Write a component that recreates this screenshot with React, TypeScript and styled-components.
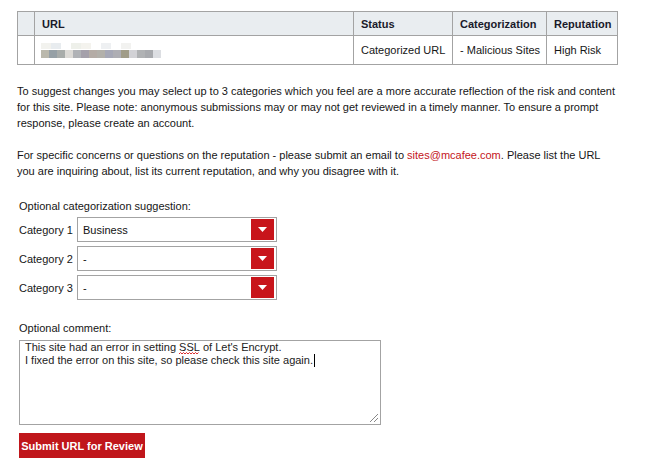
import React from 'react'
import styled, { createGlobalStyle } from 'styled-components'

const GlobalStyle = createGlobalStyle`
  html, body {
    margin: 0;
    padding: 0;
    background: #fff;
  }
  body {
    font-family: "Liberation Sans", Arial, sans-serif;
    font-size: 11px;
    color: #161616;
  }
`

const Page = styled.div`
  padding: 11px 0 0 17px;
  width: 620px;
`

const Table = styled.table`
  border-collapse: collapse;
  table-layout: fixed;
  width: 600px;
  font-size: 11px;
`

const Th = styled.th`
  background: #e9edf0;
  border: 1px solid #a3a3a3;
  text-align: left;
  font-weight: bold;
  height: 23px;
  padding: 0 7px;
  color: #1a1a2a;
  white-space: nowrap;
`

const Td = styled.td`
  border: 1px solid #a3a3a3;
  height: 28px;
  padding: 0 7px;
  white-space: nowrap;
`

const Blur = styled.svg`
  display: block;
  margin-top: 1px;
  margin-left: -1px;
`

const Text = styled.p<{ $first?: boolean }>`
  margin: ${p => (p.$first ? '18px' : '0')} 0 16px;
  line-height: 16px;
  width: 600px;
`

const Red = styled.span`
  color: #c4151c;
`

const Form = styled.div`
  padding-left: 2px;
  margin-top: 19px;
`

const Caption = styled.div`
  line-height: 16px;
  margin-bottom: 3px;
`

const Rows = styled.div`
  display: flex;
  flex-direction: column;
  gap: 4px;
`

const Row = styled.div`
  display: flex;
  align-items: center;
`

const Label = styled.span`
  width: 58px;
  white-space: nowrap;
`

const Select = styled.div`
  width: 200px;
  height: 25px;
  box-sizing: border-box;
  border: 1px solid #a3a3a3;
  display: flex;
  align-items: center;
  justify-content: space-between;
  padding: 0 2px 0 5px;
  color: #111;
`

const Arrow = styled.div`
  width: 23px;
  height: 21px;
  background: #c8151b;
  display: flex;
  align-items: center;
  justify-content: center;
`

const Comment = styled.div`
  margin-top: 20px;
  line-height: 16px;
  margin-bottom: 4px;
`

const Area = styled.div`
  position: relative;
  width: 362px;
  height: 85px;
  box-sizing: border-box;
  border: 1px solid #a3a3a3;
  padding: 0 5px;
  line-height: 13px;
  color: #222;
`

const Wavy = styled.span`
  position: relative;
  display: inline-block;
`

const Squiggle = styled.svg`
  position: absolute;
  left: 0;
  bottom: -1px;
`

const Caret = styled.span`
  display: inline-block;
  width: 1px;
  height: 13px;
  background: #000;
  vertical-align: -3px;
  margin-left: 1px;
`

const Grip = styled.svg`
  position: absolute;
  right: 1px;
  bottom: 1px;
`

const Button = styled.button`
  display: block;
  margin-top: 8px;
  height: 25px;
  width: 126px;
  padding: 0;
  border: none;
  background: #c0161b;
  color: #fff;
  font-family: "Liberation Sans", Arial, sans-serif;
  font-size: 11px;
  font-weight: bold;
  text-align: center;
  white-space: nowrap;
`

const Rule = styled.hr`
  margin: 9px 0 0 1px;
  width: 605px;
  border: none;
  border-top: 2px solid #d0d0d0;
`

const blurTop = ['#f2f2ee', '#e8ecef', '#fff', '#eef0ea', '#f4f3ee', '#fff', '#eef0f2', '#fff', '#f2f2f0']
const blurBottom = ['#bab8ac', '#96a0a6', '#a8acaa', '#dcdad6', '#b0b2b6', '#a4a0aa', '#b4aca6', '#b2b0aa', '#a6a8b6', '#aeaeb4', '#a09c88', '#d2d2d6', '#b0b2b4', '#a8aaae', '#dcdee2']

export default function App() {
  return (
    <>
      <GlobalStyle />
      <Page>
        <Table>
          <colgroup>
            <col style={{ width: 17 }} />
            <col style={{ width: 319 }} />
            <col style={{ width: 99 }} />
            <col style={{ width: 94 }} />
            <col style={{ width: 71 }} />
          </colgroup>
          <thead>
            <tr>
              <Th />
              <Th>URL</Th>
              <Th>Status</Th>
              <Th>Categorization</Th>
              <Th>Reputation</Th>
            </tr>
          </thead>
          <tbody>
            <tr>
              <Td />
              <Td>
                <Blur width="120" height="16">
                  {blurTop.map((c, i) => (
                    <rect key={i} x={i * 10} y={0} width={10} height={6} fill={c} />
                  ))}
                  {blurBottom.map((c, i) => (
                    <rect key={i} x={i * 8} y={7} width={8} height={8} fill={c} />
                  ))}
                </Blur>
              </Td>
              <Td>Categorized URL</Td>
              <Td>- Malicious Sites</Td>
              <Td>High Risk</Td>
            </tr>
          </tbody>
        </Table>

        <Text $first>
          To suggest changes you may select up to 3 categories which you feel are a more accurate reflection of the risk and content for this site. Please note: anonymous submissions may or may not get reviewed in a timely manner. To ensure a prompt response, please create an account.
        </Text>
        <Text>
          For specific concerns or questions on the reputation - please submit an email to <Red>sites@mcafee.com</Red>. Please list the URL you are inquiring about, list its current reputation, and why you disagree with it.
        </Text>

        <Form>
          <Caption>Optional categorization suggestion:</Caption>
          <Rows>
            {['Business', '-', '-'].map((v, i) => (
              <Row key={i}>
                <Label>Category {i + 1}</Label>
                <Select>
                  <span>{v}</span>
                  <Arrow>
                    <svg width="9" height="5" viewBox="0 0 9 5">
                      <path d="M0 0 H9 L4.5 5 Z" fill="#fff" />
                    </svg>
                  </Arrow>
                </Select>
              </Row>
            ))}
          </Rows>

          <Comment>Optional comment:</Comment>
          <Area>
            This site had an error in setting{' '}
            <Wavy>
              SSL
              <Squiggle width="20" height="3" viewBox="0 0 20 3">
                <path d="M0 2 L1.5 0.5 L3 2 L4.5 0.5 L6 2 L7.5 0.5 L9 2 L10.5 0.5 L12 2 L13.5 0.5 L15 2 L16.5 0.5 L18 2 L19.5 0.5" stroke="#d81818" strokeWidth="0.9" fill="none" />
              </Squiggle>
            </Wavy>{' '}
            of Let's Encrypt.
            <br />
            I fixed the error on this site, so please check this site again.<Caret />
            <Grip width="11" height="11" viewBox="0 0 11 11">
              <path d="M10 2 L2 10 M10 6 L6 10" stroke="#888" strokeWidth="1" />
            </Grip>
          </Area>
          <Button>Submit URL for Review</Button>
          <Rule />
        </Form>
      </Page>
    </>
  )
}
